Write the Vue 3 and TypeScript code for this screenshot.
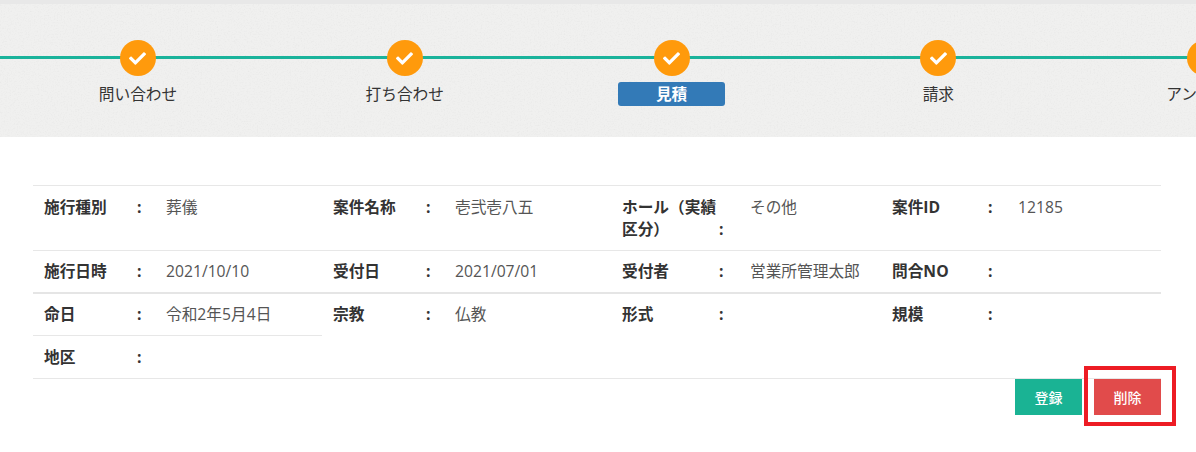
<script setup lang="ts">
interface Step { name: string; active?: boolean }
interface Field { label: string; value: string; column: string }
const steps: Step[] = [
  { name: '問い合わせ' },
  { name: '打ち合わせ' },
  { name: '見積', active: true },
  { name: '請求' },
  { name: 'アンケート' },
]
const rowOne: Field[] = [
  { label: '施行種別', value: '葬儀', column: 'a' },
  { label: '案件名称', value: '壱弐壱八五', column: 'b' },
  { label: 'ホール（実績区分）', value: 'その他', column: 'c' },
  { label: '案件ID', value: '12185', column: 'd' },
]
const rowTwo: Field[] = [
  { label: '施行日時', value: '2021/10/10', column: 'a' },
  { label: '受付日', value: '2021/07/01', column: 'b' },
  { label: '受付者', value: '営業所管理太郎', column: 'c' },
  { label: '問合NO', value: '', column: 'd' },
]
const rowThree: Field[] = [
  { label: '命日', value: '令和2年5月4日', column: 'a' },
  { label: '宗教', value: '仏教', column: 'b' },
  { label: '形式', value: '', column: 'c' },
  { label: '規模', value: '', column: 'd' },
]
const rows: Field[][] = [rowOne, rowTwo]
const checkPath = 'M173.898 439.404l-166.4-166.4c-9.997-9.997-9.997-26.206 0-36.204l36.203-36.204c9.997-9.998 26.207-9.998 36.204 0L192 312.69 432.095 72.596c9.997-9.997 26.207-9.997 36.204 0l36.203 36.204c9.997 9.997 9.997 26.206 0 36.204l-294.4 294.401c-9.998 9.997-26.207 9.997-36.204-.001z'
</script>

<template>
  <div class="page">
    <div class="topbar"></div>
    <section class="stepper">
      <svg class="paper" width="100%" height="100%" aria-hidden="true">
        <filter id="grain">
          <feTurbulence type="fractalNoise" baseFrequency="0.7" numOctaves="3" seed="11" />
          <feColorMatrix type="matrix" values="0 0 0 0 0.5  0 0 0 0 0.5  0 0 0 0 0.5  0.2 0.2 0 0 -0.19" />
        </filter>
        <rect width="100%" height="100%" filter="url(#grain)" />
      </svg>
      <div class="steps">
        <div v-for="step in steps" :key="step.name" class="step">
          <span class="dot">
            <svg viewBox="0 0 512 512" width="17" height="17"><path :d="checkPath" fill="#fff" /></svg>
          </span>
          <span class="step-name" :class="{ active: step.active }">{{ step.name }}</span>
        </div>
      </div>
    </section>

    <section class="detail">
      <div v-for="(row, i) in rows" :key="i" class="row" :class="`row-${i + 1}`">
        <div v-for="f in row" :key="f.label" class="field" :class="`col-${f.column}`">
          <span class="label">{{ f.label }}</span>
          <span class="colon">:</span>
          <span class="value">{{ f.value }}</span>
        </div>
      </div>
      <div class="row row-3">
        <div v-for="f in rowThree" :key="f.label" class="field" :class="`col-${f.column}`">
          <span class="label">{{ f.label }}</span>
          <span class="colon">:</span>
          <span class="value">{{ f.value }}</span>
        </div>
        <div class="field col-a extra">
          <span class="label">地区</span>
          <span class="colon">:</span>
          <span class="value"></span>
        </div>
      </div>
      <div class="actions">
        <button type="button" class="btn save">登録</button>
        <div class="highlighted">
          <button type="button" class="btn remove">削除</button>
        </div>
      </div>
    </section>
  </div>
</template>

<style>
html, body { margin: 0; background: #fff; }
</style>

<style scoped>
.page {
  width: 1196px;
  height: 452px;
  overflow: hidden;
  font-family: "Open Sans", "Noto Sans CJK JP", sans-serif;
  font-size: 15.7px;
  color: #333;
}
.topbar { height: 4px; background: #e8e8e8; }
.stepper {
  position: relative;
  height: 133px;
  background: #f0f0ef;
  overflow: hidden;
}
.paper { position: absolute; inset: 0; }
.stepper::before {
  content: "";
  position: absolute;
  z-index: 1;
  left: 0;
  right: 0;
  top: 52px;
  height: 3px;
  background: #1ab39b;
}
.steps {
  position: relative;
  z-index: 2;
  display: flex;
  width: 1340px;
  padding: 36px 0 0 4.6px;
}
.step {
  flex: 0 0 266.8px;
  display: flex;
  flex-direction: column;
  align-items: center;
}
.dot {
  width: 36px;
  height: 36px;
  border-radius: 50%;
  background: #ff9a0c;
  display: flex;
  align-items: center;
  justify-content: center;
}
.step-name {
  margin-top: 6px;
  width: 107px;
  height: 24px;
  line-height: 24px;
  border-radius: 3px;
  text-align: center;
  font-size: 15.7px;
  white-space: nowrap;
  color: #333;
}
.step-name.active {
  background: #337ab7;
  color: #fff;
  font-weight: 700;
}
.detail {
  margin: 48px 35px 0 33px;
  color: #333;
}
.row {
  display: grid;
  grid-template-columns: 289px 289px 270px 280px;
  border-top: 1px solid #e7e7e7;
}
.row-3 { border-top: 2px solid #e5e5e5; border-bottom: 1px solid #e7e7e7; }
.field {
  display: grid;
  align-items: start;
  padding: 9px 0 10px 11px;
  line-height: 22px;
  min-height: 22px;
}
.row-1 .field { padding-top: 10px; padding-bottom: 10px; }
.col-a { grid-template-columns: 93px 29px 1fr; }
.col-b { grid-template-columns: 93px 29px 1fr; }
.col-c { grid-template-columns: 97px 31px 1fr; }
.col-d { grid-template-columns: 96px 30px 1fr; }
.label { font-weight: 700; }
.colon { font-weight: 700; }
.row-1 .col-c .colon { align-self: end; }
.value { color: #555; white-space: nowrap; }
.row-3 .col-a:not(.extra) { border-bottom: 1px solid #e7e7e7; }
.row-3 .extra { grid-column: 1; padding-top: 10px; }
.actions {
  display: flex;
  justify-content: flex-end;
  gap: 12px;
}
.highlighted { position: relative; display: flex; }
.highlighted::after {
  content: "";
  position: absolute;
  inset: -13px -15px -11px -10px;
  border: 4px solid #ed1c24;
  pointer-events: none;
}
.btn {
  width: 67px;
  height: 36px;
  padding: 0;
  border: 0;
  color: #fff;
  font-family: inherit;
  font-size: 14px;
  font-weight: 500;
}
.save { background: #1ab394; }
.remove { background: #e14b4b; }
</style>
